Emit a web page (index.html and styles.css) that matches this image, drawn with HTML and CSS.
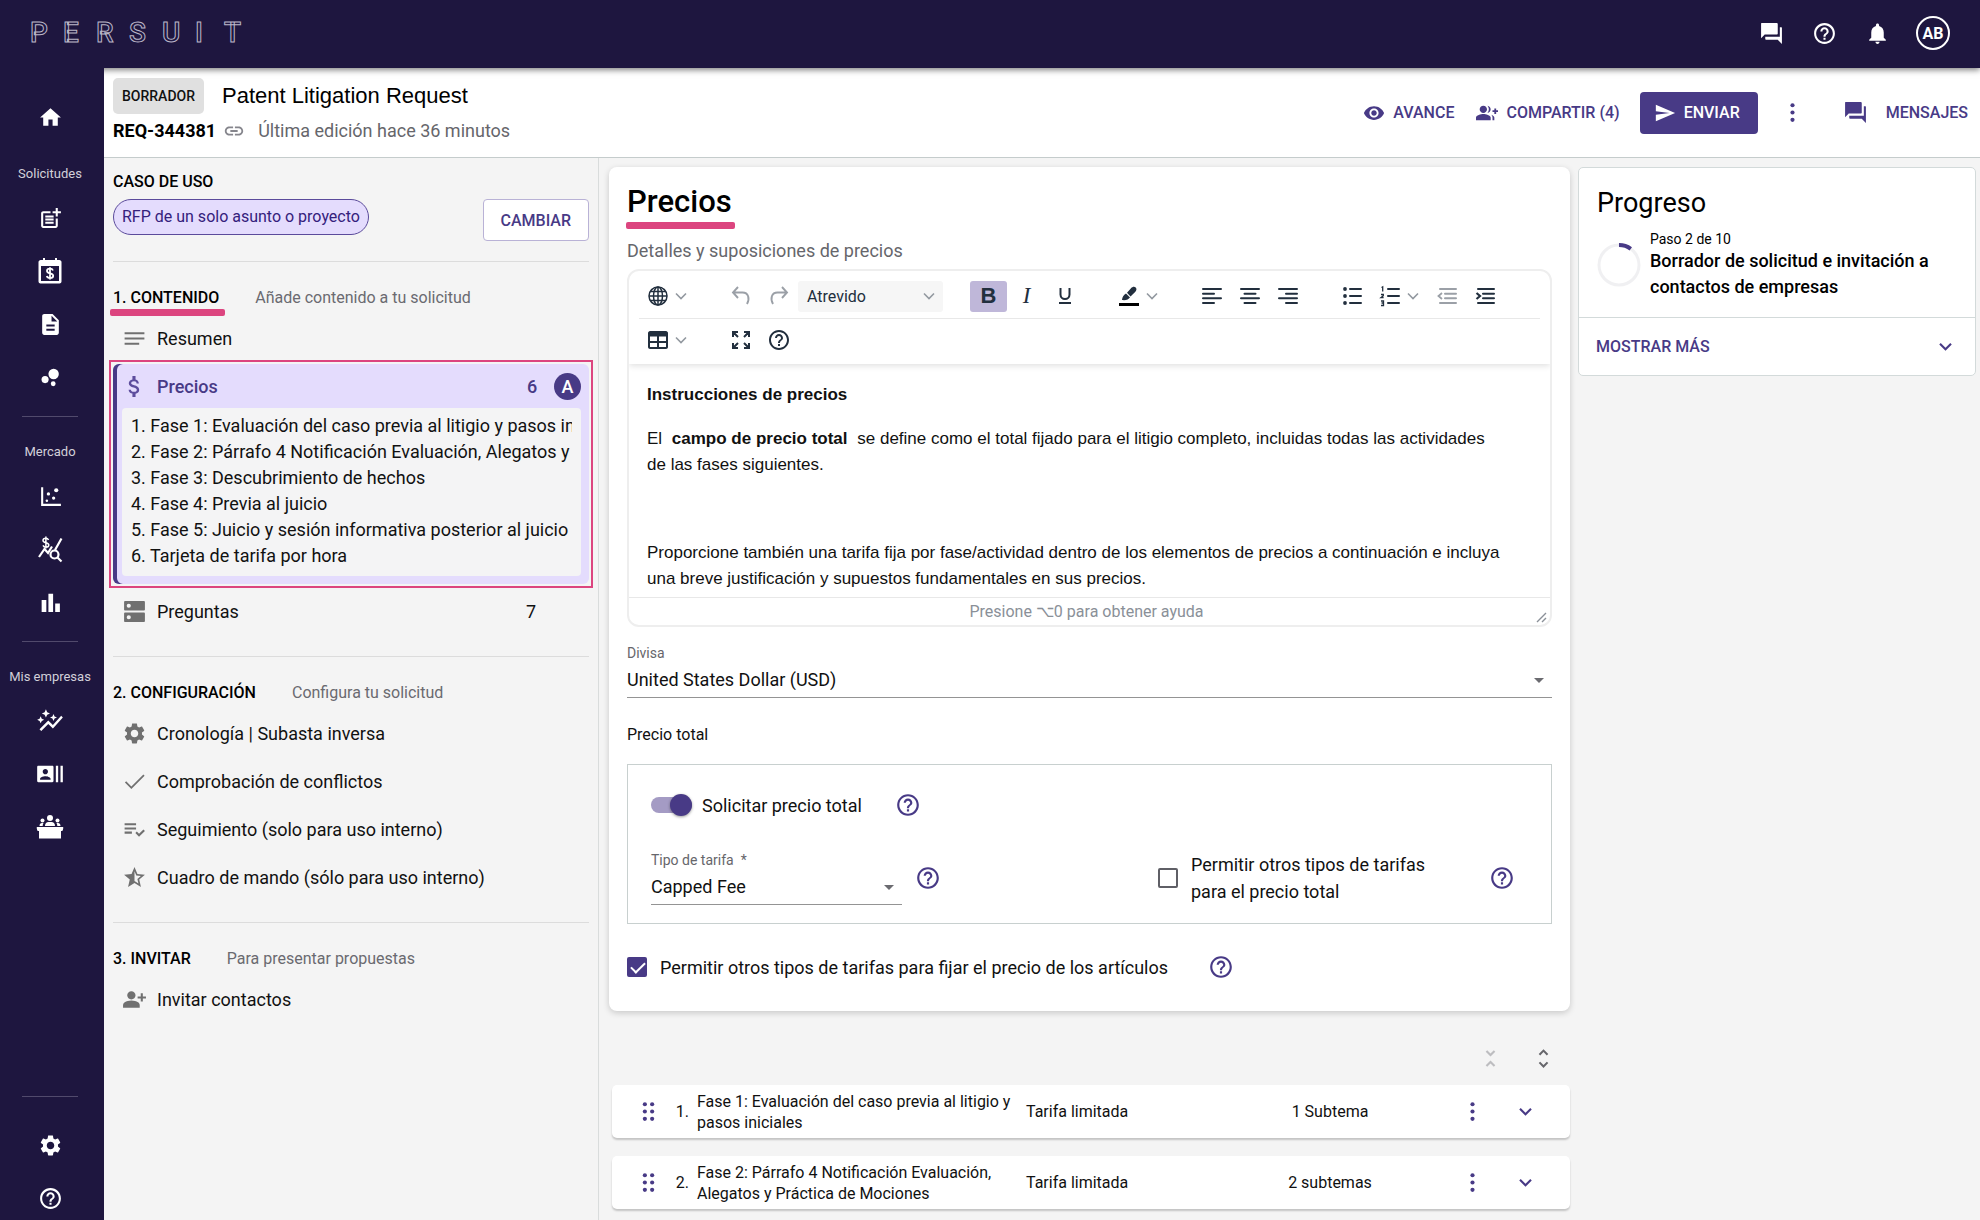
FILE: index.html
```html
<!DOCTYPE html>
<html lang="es">
<head>
    <title>Patent Litigation Request</title>
    <meta charset="UTF-8">
    <meta name="viewport" content="width=device-width, initial-scale=1">
    <link rel="stylesheet" href="styles.css">
</head>
<body>
    <!-- shared icons -->
    <svg class="sprite" aria-hidden="true">
        <symbol id="i-home" viewBox="0 0 24 24"><path d="M10 20v-6h4v6h5v-8h3L12 3 2 12h3v8z"/></symbol>
        <symbol id="i-help" viewBox="0 0 24 24"><path d="M11 18h2v-2h-2v2zm1-16C6.48 2 2 6.48 2 12s4.48 10 10 10 10-4.48 10-10S17.52 2 12 2zm0 18c-4.41 0-8-3.59-8-8s3.59-8 8-8 8 3.59 8 8-3.59 8-8 8zm0-14c-2.21 0-4 1.79-4 4h2c0-1.1.9-2 2-2s2 .9 2 2c0 2-3 1.75-3 5h2c0-2.25 3-2.5 3-5 0-2.21-1.79-4-4-4z"/></symbol>
        <symbol id="i-forum" viewBox="0 0 24 24"><path d="M2.5 2H17c.5 0 1 .5 1 1v9c0 .6-.4 1-1 1H5.500L2 16.500V2.500c0-.3.200-.5.500-.5z"/><path d="M20 6h1.500c.3 0 .5.200.5.500V22l-4-4H7c-.5 0-1-.5-1-1v-2h14z"/></symbol>
        <symbol id="i-bell" viewBox="0 0 24 24"><path d="M12 22c1.100 0 2-.9 2-2h-4c0 1.100.89 2 2 2zm6-6v-5c0-3.070-1.640-5.640-4.500-6.320V4c0-.83-.67-1.500-1.500-1.500s-1.500.67-1.500 1.500v.68C7.630 5.360 6 7.920 6 11v5l-2 2v1h16v-1l-2-2z"/></symbol>
        <symbol id="i-gear" viewBox="0 0 24 24"><path d="M19.140 12.940c.04-.3.060-.61.060-.94 0-.32-.02-.64-.07-.94l2.030-1.580c.18-.14.23-.41.12-.61l-1.920-3.320c-.12-.22-.37-.29-.59-.22l-2.390.96c-.5-.38-1.030-.7-1.620-.94l-.36-2.540c-.04-.24-.24-.41-.48-.41h-3.840c-.24 0-.43.17-.47.41l-.36 2.540c-.59.24-1.130.57-1.620.94l-2.390-.96c-.22-.08-.47 0-.59.22L2.740 8.870c-.12.21-.08.47.12.61l2.030 1.580c-.05.3-.09.63-.09.94s.02.64.07.94l-2.030 1.580c-.18.14-.23.41-.12.61l1.920 3.320c.12.22.37.29.59.22l2.390-.96c.5.38 1.030.7 1.620.94l.36 2.540c.05.24.24.41.48.41h3.840c.24 0 .44-.17.47-.41l.36-2.540c.59-.24 1.130-.56 1.620-.94l2.390.96c.22.08.47 0 .59-.22l1.920-3.320c.12-.22.07-.47-.12-.61l-2.010-1.580zM12 15.600c-1.980 0-3.600-1.620-3.600-3.600s1.620-3.600 3.600-3.600 3.600 1.620 3.600 3.600-1.620 3.600-3.600 3.600z"/></symbol>
        <symbol id="i-down" viewBox="0 0 24 24"><path d="M16.590 8.590 12 13.170 7.410 8.590 6 10l6 6 6-6z"/></symbol>
        <symbol id="i-more" viewBox="0 0 24 24"><circle cx="12" cy="5" r="2"/><circle cx="12" cy="12" r="2"/><circle cx="12" cy="19" r="2"/></symbol>
        <symbol id="i-drag" viewBox="0 0 24 24"><circle cx="8.500" cy="5" r="2"/><circle cx="8.500" cy="12" r="2"/><circle cx="8.500" cy="19" r="2"/><circle cx="15.500" cy="5" r="2"/><circle cx="15.500" cy="12" r="2"/><circle cx="15.500" cy="19" r="2"/></symbol>
        <symbol id="i-chev" viewBox="0 0 14 14"><path d="M2 4.500l5 5 5-5" fill="none" stroke="currentColor" stroke-width="1.600"/></symbol>
    </svg>

    <header class="header">
        <a class="logo" href="#" aria-label="Persuit"><span>P</span><span>E</span><span>R</span><span>S</span><span>U</span><span>I</span><span>T</span></a>
        <div class="header-tools">
            <button class="icon-btn" aria-label="Chat"><svg class="icon"><use href="#i-forum"/></svg></button>
            <button class="icon-btn" aria-label="Ayuda"><svg class="icon"><use href="#i-help"/></svg></button>
            <button class="icon-btn" aria-label="Notificaciones"><svg class="icon"><use href="#i-bell"/></svg></button>
            <button class="avatar">AB</button>
        </div>
    </header>

    <div class="shell">
        <nav class="sidebar">
            <a href="#" aria-label="Inicio"><svg class="icon"><use href="#i-home"/></svg></a>
            <span class="nav-label">Solicitudes</span>
            <div class="nav-group">
                <a href="#" aria-label="Nueva"><svg class="icon" viewBox="0 0 24 24"><path d="M17 19.220H5V7h7V5H5c-1.100 0-2 .9-2 2v12c0 1.100.9 2 2 2h12c1.100 0 2-.9 2-2v-7h-2v7.220z"/><path d="M19 2h-2v3h-3v2h3v3h2V7h3V5h-3V2zM7 9h8v2H7zM7 12h8v2H7zM7 15h8v2H7z"/></svg></a>
                <a href="#" aria-label="Calendario"><svg class="icon big" viewBox="0 0 28 28"><path fill-rule="evenodd" d="M7 1h2v2h10V1h2v2h2.500c1 0 2 1 2 2v19.500c0 1-1 2-2 2h-19c-1 0-2-1-2-2V5c0-1 1-2 2-2H7zM5 9v15h18V9z"/><path d="M17 13.500c-.5-1.300-1.600-1.800-3-1.800-1.700 0-3 .8-3 2.200 0 3.200 6.200 1.600 6.200 4.900 0 1.500-1.400 2.300-3.200 2.300-1.600 0-2.800-.7-3.200-2M14 10.300v12.200" fill="none" stroke="currentColor" stroke-width="1.800"/></svg></a>
                <a href="#" aria-label="Documentos"><svg class="icon" viewBox="0 0 24 24"><path d="M14 2H6c-1.100 0-2 .9-2 2v16c0 1.100.9 2 2 2h12c1.100 0 2-.9 2-2V8l-6-6zm2 16H8v-2h8v2zm0-4H8v-2h8v2zm-3-5V3.500L18.500 9H13z"/></svg></a>
                <a href="#" aria-label="Burbujas"><svg class="icon" viewBox="0 0 24 24"><circle cx="6.800" cy="14" r="3.400"/><circle cx="14.600" cy="18" r="2.300"/><circle cx="15" cy="8.600" r="5"/></svg></a>
            </div>
            <hr>
            <span class="nav-label">Mercado</span>
            <div class="nav-group">
                <a href="#" aria-label="Dispersión"><svg class="icon" viewBox="0 0 24 24"><path d="M3 3h2v16h17v2H3z"/><circle cx="8.500" cy="16" r="1.200"/><circle cx="10" cy="9.500" r="1.600"/><circle cx="15" cy="13.500" r="1.600"/><circle cx="17.500" cy="6" r="2"/></svg></a>
                <a href="#" aria-label="Análisis de precios"><svg class="icon big" viewBox="0 0 28 28"><g fill="none" stroke="currentColor"><path d="M3 22l5.500-8 3.500 4 4-6.500M19 15l6.500-11.500" stroke-width="2.200"/><path d="M12.500 5c-.5-1.300-1.400-1.800-2.700-1.800-1.500 0-2.800.8-2.800 2.200 0 2.900 5.800 1.800 5.800 4.700 0 1.300-1.200 2.100-2.800 2.100-1.400 0-2.500-.6-3-1.800M9.900 1.500v12" stroke-width="1.500"/><circle cx="18.500" cy="19.500" r="4" stroke-width="2.200"/><path d="M21.500 22.500l4 4" stroke-width="2.200"/></g></svg></a>
                <a href="#" aria-label="Estadísticas"><svg class="icon" viewBox="0 0 24 24"><path d="M3.500 9.500H8V21H3.500zM10 3.500h4.500V21H10zM16.500 13H21v8h-4.500z"/></svg></a>
            </div>
            <hr>
            <span class="nav-label">Mis empresas</span>
            <div class="nav-group">
                <a href="#" aria-label="Tendencias"><svg class="icon big" viewBox="0 0 24 24"><path d="M14.060 9.940 12 9l2.060-.94L15 6l.94 2.060L18 9l-2.060.94L15 12l-.94-2.060zM4 14l.94-2.060L7 11l-2.060-.94L4 8l-.94 2.060L1 11l2.060.94L4 14zm4.500-5 1.090-2.410L12 5.500 9.590 4.410 8.500 2 7.410 4.410 5 5.500l2.410 1.090L8.500 9zm-4 11.500 6-6.010 4 4L23 8.930l-1.410-1.410-7.090 7.970-4-4L3 19l1.500 1.500z"/></svg></a>
                <a href="#" aria-label="Contactos"><svg class="icon big" viewBox="0 0 24 24"><path d="M21 5v14h2V5h-2zm-4 14h2V5h-2v14zM14 5H2c-.55 0-1 .45-1 1v12c0 .55.45 1 1 1h12c.55 0 1-.45 1-1V6c0-.55-.45-1-1-1zM8 7.750c1.240 0 2.250 1.010 2.250 2.250S9.240 12.250 8 12.250 5.750 11.240 5.750 10 6.760 7.750 8 7.750zM12.500 17h-9v-.75c0-1.500 3-2.250 4.500-2.250s4.500.75 4.500 2.250V17z"/></svg></a>
                <a href="#" aria-label="Paneles"><svg class="icon big" viewBox="0 0 28 28"><circle cx="14" cy="5" r="3"/><circle cx="6.500" cy="7.500" r="2"/><circle cx="21.500" cy="7.500" r="2"/><path d="M9 13c0-2.500 1.500-4 3.500-4h3c2 0 3.500 1.500 3.500 4zM3.500 13c0-1.800 1-3 2.500-3h1.500c-.6 1-.8 2-.8 3zM24.500 13c0-1.800-1-3-2.500-3h-1.500c.6 1 .8 2 .8 3z"/><path d="M1.500 14h25c.6 0 .9.400.8.900l-.5 2.300c-.1.500-.4.800-.9.800H25v7.500H3V18h-.9c-.5 0-.8-.3-.9-.8l-.5-2.300c-.1-.5.200-.9.800-.9z"/></svg></a>
            </div>
            <hr class="push">
            <div class="nav-group bottom">
                <a href="#" aria-label="Ajustes"><svg class="icon"><use href="#i-gear"/></svg></a>
                <a href="#" aria-label="Ayuda"><svg class="icon"><use href="#i-help"/></svg></a>
            </div>
        </nav>

        <div class="page">
            <div class="topbar">
                <div class="topbar-info">
                    <div class="title-row">
                        <span class="status-chip">BORRADOR</span>
                        <h1>Patent Litigation Request</h1>
                    </div>
                    <div class="meta-row">
                        <b>REQ-344381</b>
                        <svg class="link-icon" viewBox="0 0 24 24"><path d="M3.900 12c0-1.710 1.390-3.100 3.100-3.100h4V7H7c-2.760 0-5 2.240-5 5s2.240 5 5 5h4v-1.900H7c-1.710 0-3.100-1.390-3.100-3.100zM8 13h8v-2H8v2zm9-6h-4v1.900h4c1.710 0 3.100 1.390 3.100 3.100s-1.390 3.100-3.100 3.100h-4V17h4c2.760 0 5-2.240 5-5s-2.240-5-5-5z"/></svg>
                        <span>Última edición hace 36 minutos</span>
                    </div>
                </div>
                <div class="actions">
                    <button class="text-btn"><svg class="icon small" viewBox="0 0 24 24"><path d="M12 4.500C7 4.500 2.730 7.610 1 12c1.730 4.390 6 7.500 11 7.500s9.270-3.110 11-7.500c-1.730-4.390-6-7.500-11-7.500zM12 17c-2.760 0-5-2.240-5-5s2.240-5 5-5 5 2.240 5 5-2.240 5-5 5zm0-8c-1.660 0-3 1.340-3 3s1.340 3 3 3 3-1.340 3-3-1.340-3-3-3z"/></svg>AVANCE</button>
                    <button class="text-btn share"><svg class="icon small" viewBox="0 0 24 24"><path d="M22 9V7h-2v2h-2v2h2v2h2v-2h2V9zM8 12c2.210 0 4-1.790 4-4s-1.790-4-4-4-4 1.790-4 4 1.790 4 4 4zm0 1c-2.670 0-8 1.340-8 4v3h16v-3c0-2.660-5.330-4-8-4zm4.510-8.950C13.430 5.110 14 6.490 14 8s-.57 2.890-1.490 3.950C14.470 11.700 16 10.040 16 8s-1.530-3.700-3.490-3.950zm4.020 9.780C17.420 14.660 18 15.700 18 17v3h2v-3c0-1.450-1.590-2.510-3.470-3.170z"/></svg>COMPARTIR (4)</button>
                    <button class="send-btn"><svg class="icon small" viewBox="0 0 24 24"><path d="M2 21 23 12 2 3v7l15 2-15 2z"/></svg>ENVIAR</button>
                    <button class="icon-btn" aria-label="Más"><svg class="icon"><use href="#i-more"/></svg></button>
                    <button class="text-btn messages"><svg class="icon"><use href="#i-forum"/></svg>MENSAJES</button>
                </div>
            </div>

            <div class="body">
                <div class="steps">
                    <section class="use-case">
                        <h2>CASO DE USO</h2>
                        <div class="use-case-row">
                            <span class="use-chip">RFP de un solo asunto o proyecto</span>
                            <button class="change-btn">CAMBIAR</button>
                        </div>
                    </section>

                    <section class="step">
                        <div class="step-head"><h2 class="marked">1. CONTENIDO</h2><span>Añade contenido a tu solicitud</span></div>
                        <a class="step-row" href="#"><svg class="icon" viewBox="0 0 24 24"><path d="M2.500 18h14v-2h-14zM2.500 6v2h19V6zm0 7h19v-2h-19z"/></svg>Resumen</a>
                        <div class="highlight">
                            <div class="active-step">
                                <a class="step-row" href="#"><svg class="icon" viewBox="0 0 24 24"><path d="M11.800 10.900c-2.270-.59-3-1.200-3-2.150 0-1.090 1.010-1.850 2.700-1.850 1.780 0 2.440.85 2.500 2.100h2.210c-.07-1.720-1.120-3.300-3.210-3.810V2h-3v3.160c-1.940.42-3.500 1.680-3.500 3.610 0 2.310 1.910 3.460 4.700 4.130 2.500.6 3 1.480 3 2.410 0 .69-.49 1.790-2.700 1.790-2.060 0-2.870-.92-2.980-2.100h-2.200c.12 2.190 1.760 3.420 3.680 3.830V22h3v-3.150c1.950-.37 3.500-1.500 3.500-3.550 0-2.840-2.430-3.810-4.700-4.400z"/></svg>Precios<span class="count">6</span><span class="owner">A</span></a>
                                <ol class="phases">
                                    <li>1. Fase 1: Evaluación del caso previa al litigio y pasos iniciales</li>
                                    <li>2. Fase 2: Párrafo 4 Notificación Evaluación, Alegatos y Práctica de Mociones</li>
                                    <li>3. Fase 3: Descubrimiento de hechos</li>
                                    <li>4. Fase 4: Previa al juicio</li>
                                    <li>5. Fase 5: Juicio y sesión informativa posterior al juicio</li>
                                    <li>6. Tarjeta de tarifa por hora</li>
                                </ol>
                            </div>
                        </div>
                        <a class="step-row" href="#"><svg class="icon" viewBox="0 0 24 24"><path d="M21 13H3c-.5 0-1 .5-1 1v7c0 .5.500 1 1 1h18c.5 0 1-.5 1-1v-7c0-.5-.5-1-1-1zM6.500 19.500a2 2 0 1 1 0-4 2 2 0 0 1 0 4zM21 2H3c-.5 0-1 .5-1 1v7c0 .5.500 1 1 1h18c.5 0 1-.5 1-1V3c0-.5-.5-1-1-1zM6.500 8.500a2 2 0 1 1 0-4 2 2 0 0 1 0 4z"/></svg>Preguntas<span class="count">7</span></a>
                    </section>

                    <section class="step">
                        <div class="step-head"><h2>2. CONFIGURACIÓN</h2><span>Configura tu solicitud</span></div>
                        <a class="step-row" href="#"><svg class="icon"><use href="#i-gear"/></svg>Cronología | Subasta inversa</a>
                        <a class="step-row" href="#"><svg class="icon" viewBox="0 0 24 24"><path d="M9 16.800 4 11.800l-1.200 1.200L9 19.200 21.700 6.500l-1.200-1.200z"/></svg>Comprobación de conflictos</a>
                        <a class="step-row" href="#"><svg class="icon" viewBox="0 0 24 24"><path d="M2.500 10h11v2h-11zm0-4h11v2h-11zm0 8h7v2h-7zm18.100-2.100-4.250 4.250-2.120-2.120-1.410 1.410L16.340 19 22 13.340z"/></svg>Seguimiento (solo para uso interno)</a>
                        <a class="step-row" href="#"><svg class="icon" viewBox="0 0 24 24"><path d="m22 9.240-7.190-.62L12 2 9.190 8.630 2 9.240l5.460 4.730L5.820 21 12 17.270 18.180 21l-1.630-7.030L22 9.240zM12 15.400V6.100l1.710 4.040 4.380.38-3.320 2.880 1 4.280L12 15.400z"/></svg>Cuadro de mando (sólo para uso interno)</a>
                    </section>

                    <section class="step">
                        <div class="step-head"><h2>3. INVITAR</h2><span>Para presentar propuestas</span></div>
                        <a class="step-row" href="#"><svg class="icon" viewBox="0 0 24 24"><path d="M15.390 14.560C13.710 13.700 11.530 13 9 13s-4.710.7-6.390 1.560A2.970 2.970 0 0 0 1 17.220V20h16v-2.780c0-1.120-.61-2.150-1.610-2.660zM9 12c2.210 0 4-1.790 4-4s-1.790-4-4-4-4 1.790-4 4 1.790 4 4 4zm11-3V6h-2v3h-3v2h3v3h2v-3h3V9z"/></svg>Invitar contactos</a>
                    </section>
                </div>

                <main class="content">
                    <section class="card">
                        <h2 class="card-title">Precios</h2>
                        <p class="card-sub">Detalles y suposiciones de precios</p>

                        <div class="editor">
                            <div class="toolbar">
                                <div class="tool-row">
                                    <div class="tools">
                                        <button class="drop" aria-label="Idioma"><svg class="ticon" viewBox="0 0 22 22"><g fill="none" stroke="currentColor" stroke-width="1.500"><circle cx="11" cy="11" r="9"/><ellipse cx="11" cy="11" rx="4.500" ry="9"/><path d="M11 2v18M2 11h18M3.500 6.500h15M3.500 15.500h15"/></g></svg><svg class="chev"><use href="#i-chev"/></svg></button>
                                    </div>
                                    <div class="tools">
                                        <button class="tool off" aria-label="Deshacer"><svg class="ticon" viewBox="0 0 22 22"><path d="M8 2 3 7.500 8 13M3 7.500h9.500c6 0 7.500 6 4.500 11.500" fill="none" stroke="currentColor" stroke-width="1.900"/></svg></button>
                                        <button class="tool off" aria-label="Rehacer"><svg class="ticon" viewBox="0 0 22 22"><path d="M14 2l5 5.500-5 5.500M19 7.500H9.500c-6 0-7.500 6-4.500 11.500" fill="none" stroke="currentColor" stroke-width="1.900"/></svg></button>
                                        <button class="style-pick">Atrevido<svg class="chev"><use href="#i-chev"/></svg></button>
                                    </div>
                                    <div class="tools">
                                        <button class="tool on" aria-label="Negrita"><b>B</b></button>
                                        <button class="tool" aria-label="Cursiva"><i>I</i></button>
                                        <button class="tool" aria-label="Subrayado"><svg class="ticon" viewBox="0 0 22 22"><path d="M6.500 3v6.500a4.500 4.500 0 0 0 9 0V3M5 18h12" fill="none" stroke="currentColor" stroke-width="2"/></svg></button>
                                    </div>
                                    <div class="tools">
                                        <button class="drop" aria-label="Color"><svg class="ticon" viewBox="0 0 22 22"><path d="M4 15c.2-3 1.500-5 4-6.500l4 4C10.500 14.500 8 15.500 4 15zM9 7.800l4-4.500c1.500-1.800 3.500-2 4.700-.8s1 3.200-.8 4.700l-4.400 4.200z"/><path fill="#000" d="M1 18h20v3H1z"/></svg><svg class="chev"><use href="#i-chev"/></svg></button>
                                    </div>
                                    <div class="tools">
                                        <button class="tool" aria-label="Izquierda"><svg class="ticon" viewBox="0 0 22 22"><path d="M2 4h18M2 8.700h11M2 13.300h18M2 18h11" class="bars"/></svg></button>
                                        <button class="tool" aria-label="Centro"><svg class="ticon" viewBox="0 0 22 22"><path d="M2 4h18M5.500 8.700h11M2 13.300h18M5.500 18h11" class="bars"/></svg></button>
                                        <button class="tool" aria-label="Derecha"><svg class="ticon" viewBox="0 0 22 22"><path d="M2 4h18M9 8.700h11M2 13.300h18M9 18h11" class="bars"/></svg></button>
                                    </div>
                                    <div class="tools">
                                        <button class="tool" aria-label="Viñetas"><svg class="ticon" viewBox="0 0 22 22"><path d="M9 4h11M9 11h11M9 18h11" class="bars"/><circle cx="4" cy="4" r="1.900"/><circle cx="4" cy="11" r="1.900"/><circle cx="4" cy="18" r="1.900"/></svg></button>
                                        <button class="drop" aria-label="Numeración"><svg class="ticon" viewBox="0 0 22 22"><path d="M9 4h11M9 11h11M9 18h11" class="bars"/><path d="M2.500 2.500l1.200-.6v4.600M2 9.500h2.300v1.300L2 12.700h2.600M2 16h2.500v4.500H2M4.500 18H2.500" fill="none" stroke="currentColor" stroke-width="1.300"/></svg><svg class="chev"><use href="#i-chev"/></svg></button>
                                        <button class="tool off" aria-label="Reducir sangría"><svg class="ticon" viewBox="0 0 22 22"><path d="M4 4h16M9 8.700h11M9 13.300h11M4 18h16" class="bars"/><path d="M6 8l-3.500 3L6 14" fill="none" stroke="currentColor" stroke-width="1.800"/></svg></button>
                                        <button class="tool" aria-label="Aumentar sangría"><svg class="ticon" viewBox="0 0 22 22"><path d="M4 4h16M9 8.700h11M9 13.300h11M4 18h16" class="bars"/><path d="M2.500 8 6 11l-3.500 3" fill="none" stroke="currentColor" stroke-width="2.200"/></svg></button>
                                    </div>
                                </div>
                                <div class="tool-row second">
                                    <div class="tools">
                                        <button class="drop" aria-label="Tabla"><svg class="ticon" viewBox="0 0 22 22"><path fill-rule="evenodd" d="M3 2h16c1 0 2 1 2 2v14c0 1-1 2-2 2H3c-1 0-2-1-2-2V4c0-1 1-2 2-2zm0 5.500V12h7V7.500zm9 0V12h7V7.500zM3 14v4h7v-4zm9 0v4h7v-4z"/></svg><svg class="chev"><use href="#i-chev"/></svg></button>
                                    </div>
                                    <div class="tools">
                                        <button class="tool" aria-label="Pantalla completa"><svg class="ticon" viewBox="0 0 22 22"><path d="M3 8V3h5M3 3l5 5M14 3h5v5M19 3l-5 5M3 14v5h5M3 19l5-5M19 14v5h-5M19 19l-5-5" fill="none" stroke="currentColor" stroke-width="2"/></svg></button>
                                        <button class="tool" aria-label="Ayuda"><svg class="ticon" viewBox="1 1 22 22"><use href="#i-help" width="24" height="24"/></svg></button>
                                    </div>
                                </div>
                            </div>
                            <div class="editor-text">
                                <p><b>Instrucciones de precios</b></p>
                                <p>El <b class="term">campo de precio total</b> se define como el total fijado para el litigio completo, incluidas todas las actividades<br>de las fases siguientes.</p>
                                <p><br></p>
                                <p>Proporcione también una tarifa fija por fase/actividad dentro de los elementos de precios a continuación e incluya<br>una breve justificación y supuestos fundamentales en sus precios.</p>
                            </div>
                            <div class="editor-status">Presione ⌥0 para obtener ayuda
                                <svg class="grip" viewBox="0 0 12 12"><path d="M2 11l9-9M7 11l4-4" fill="none" stroke="currentColor" stroke-width="1.400"/></svg>
                            </div>
                        </div>

                        <div class="field currency">
                            <label for="currency">Divisa</label>
                            <select id="currency"><option>United States Dollar (USD)</option></select>
                        </div>

                        <h3>Precio total</h3>
                        <div class="total-box">
                            <div class="switch-row">
                                <input class="switch" type="checkbox" id="total" checked>
                                <label for="total">Solicitar precio total</label>
                                <button class="help" aria-label="Ayuda"><svg class="hicon"><use href="#i-help"/></svg></button>
                            </div>
                            <div class="fee-row">
                                <div class="field fee">
                                    <label for="fee">Tipo de tarifa &nbsp;*</label>
                                    <select id="fee"><option>Capped Fee</option></select>
                                </div>
                                <button class="help" aria-label="Ayuda"><svg class="hicon"><use href="#i-help"/></svg></button>
                                <div class="check other">
                                    <input type="checkbox" id="other-total">
                                    <label for="other-total">Permitir otros tipos de tarifas para el precio total</label>
                                </div>
                                <button class="help" aria-label="Ayuda"><svg class="hicon"><use href="#i-help"/></svg></button>
                            </div>
                        </div>

                        <div class="check items">
                            <input type="checkbox" id="other-items" checked>
                            <label for="other-items">Permitir otros tipos de tarifas para fijar el precio de los artículos</label>
                            <button class="help" aria-label="Ayuda"><svg class="hicon"><use href="#i-help"/></svg></button>
                        </div>
                    </section>

                    <div class="expanders">
                        <button class="icon-btn faded" aria-label="Contraer todo"><svg class="icon" viewBox="0 0 24 24"><path d="M7.410 18.590 8.830 20 12 16.830 15.170 20l1.410-1.410L12 14zm9.180-13.180L15.170 4 12 7.170 8.830 4 7.410 5.410 12 10z"/></svg></button>
                        <button class="icon-btn" aria-label="Expandir todo"><svg class="icon" viewBox="0 0 24 24"><path d="M12 5.830 15.170 9l1.410-1.410L12 3 7.410 7.590 8.830 9zm0 12.340L8.830 15l-1.410 1.410L12 21l4.590-4.590L15.170 15z"/></svg></button>
                    </div>

                    <article class="item">
                        <svg class="icon drag"><use href="#i-drag"/></svg>
                        <span class="num">1.</span>
                        <span class="name">Fase 1: Evaluación del caso previa al litigio y pasos iniciales</span>
                        <span class="type">Tarifa limitada</span>
                        <span class="subs">1 Subtema</span>
                        <button class="icon-btn" aria-label="Más"><svg class="icon"><use href="#i-more"/></svg></button>
                        <button class="icon-btn" aria-label="Abrir"><svg class="icon"><use href="#i-down"/></svg></button>
                    </article>
                    <article class="item">
                        <svg class="icon drag"><use href="#i-drag"/></svg>
                        <span class="num">2.</span>
                        <span class="name">Fase 2: Párrafo 4 Notificación Evaluación, Alegatos y Práctica de Mociones</span>
                        <span class="type">Tarifa limitada</span>
                        <span class="subs">2 subtemas</span>
                        <button class="icon-btn" aria-label="Más"><svg class="icon"><use href="#i-more"/></svg></button>
                        <button class="icon-btn" aria-label="Abrir"><svg class="icon"><use href="#i-down"/></svg></button>
                    </article>
                </main>

                <aside class="progress">
                    <div class="progress-main">
                        <h2>Progreso</h2>
                        <div class="progress-row">
                            <svg class="ring" viewBox="0 0 44 44"><circle cx="22" cy="22" r="20" fill="none" stroke="#f0f0f2" stroke-width="3"/><path d="M22 2a20 20 0 0 1 11.800 3.800" fill="none" stroke="#483a86" stroke-width="4"/></svg>
                            <div>
                                <p class="progress-step">Paso 2 de 10</p>
                                <p class="progress-name">Borrador de solicitud e invitación a contactos de empresas</p>
                            </div>
                        </div>
                    </div>
                    <button class="show-more">MOSTRAR MÁS<svg class="icon"><use href="#i-down"/></svg></button>
                </aside>
            </div>
        </div>
    </div>
</body>
</html>
```

FILE: styles.css
```css
* {
    box-sizing: border-box;
}

body {
    margin: 0;
    min-height: 100vh;
    display: flex;
    flex-direction: column;
    background: #f4f4f4;
    color: #111;
    font-family: Roboto, "Liberation Sans", sans-serif;
    font-size: 18px;
}

h1, h2, h3, p, ol {
    margin: 0;
    padding: 0;
}

a {
    color: inherit;
    text-decoration: none;
}

button {
    padding: 0;
    border: none;
    background: none;
    color: inherit;
    font: inherit;
    cursor: pointer;
}

svg {
    display: block;
    flex: none;
    fill: currentColor;
}

.sprite {
    position: absolute;
    width: 0;
    height: 0;
}

.icon {
    width: 25px;
    height: 25px;
}

.icon.small {
    width: 22px;
    height: 22px;
}

.icon.big {
    width: 28px;
    height: 28px;
}

.icon-btn {
    display: flex;
    align-items: center;
    justify-content: center;
}

/* header */
.header {
    position: relative;
    z-index: 2;
    display: flex;
    align-items: center;
    justify-content: space-between;
    height: 68px;
    padding: 0 30px 2px;
    background: #1e163f;
    color: #fff;
    box-shadow: 0 2px 6px rgba(0, 0, 0, 0.5);
}

.logo {
    display: flex;
    font-size: 28px;
    line-height: 32px;
    font-weight: 500;
    color: #1e163f;
    -webkit-text-stroke: 1px #bbb7c9;
}

.logo span {
    width: 33px;
}

.logo span:nth-child(6) {
    width: 29px;
}

.header-tools {
    display: flex;
    align-items: center;
    gap: 28px;
}

.avatar {
    width: 34px;
    height: 34px;
    margin-left: -2px;
    border: 2px solid #fff;
    border-radius: 50%;
    font-size: 16px;
    font-weight: 700;
}

/* left navigation */
.shell {
    flex: 1;
    display: flex;
}

.sidebar {
    position: relative;
    z-index: 3;
    flex: none;
    width: 104px;
    padding: 27px 4px 0 0;
    display: flex;
    flex-direction: column;
    align-items: center;
    background: #1e163f;
    color: #fff;
}

.sidebar a {
    display: flex;
    align-items: center;
    justify-content: center;
    width: 100px;
    height: 44px;
}

.nav-group {
    display: flex;
    flex-direction: column;
    gap: 9px;
}

.sidebar hr {
    width: 56px;
    height: 1px;
    margin: 17px 0 0;
    border: none;
    background: #514a6c;
}

.sidebar hr.push {
    margin-top: auto;
}

.nav-group.bottom {
    margin-top: 26px;
}

.nav-label {
    margin: 26px 0 13px;
    font-size: 13px;
    line-height: 18px;
    color: #d2d0d9;
}

/* request bar */
.page {
    flex: 1;
    min-width: 0;
}

.topbar {
    display: flex;
    justify-content: space-between;
    padding: 10px 12px 14px 9px;
    background: #fff;
    border-bottom: 1px solid #c5cccc;
}

.title-row {
    display: flex;
    align-items: center;
    gap: 18px;
    height: 36px;
    margin-bottom: 5px;
}

.title-row h1 {
    font: 22px "Liberation Sans", Arial, sans-serif;
    color: #000;
}

.status-chip {
    padding: 0 9px;
    border-radius: 5px;
    background: #e0e0e0;
    font-size: 14px;
    line-height: 36px;
    font-weight: 500;
}

.meta-row {
    display: flex;
    align-items: center;
    line-height: 24px;
    color: #66666b;
}

.meta-row b {
    font-weight: 700;
    color: #000;
}

.link-icon {
    width: 22px;
    height: 22px;
    margin: 0 13px 0 7px;
    fill: #85858c;
}

.actions {
    display: flex;
    align-items: center;
    padding-top: 4px;
    color: #483a86;
    font-size: 16px;
    font-weight: 500;
}

.text-btn, .send-btn {
    display: flex;
    align-items: center;
    gap: 8px;
}

.share {
    margin: 0 20px 0 22px;
}

.send-btn {
    height: 42px;
    padding: 0 18px 0 14px;
    margin-right: 22px;
    border-radius: 4px;
    background: #483a86;
    color: #fff;
}

.messages {
    gap: 18px;
    margin-left: 38px;
}

/* steps column */
.body {
    display: flex;
}

.steps {
    flex: none;
    width: 495px;
    min-height: 1062px;
    padding: 0 9px;
    border-right: 1px solid #d9dcdc;
}

.steps h2 {
    font-size: 16px;
    line-height: 24px;
    font-weight: 500;
    color: #000;
}

.use-case {
    padding: 12px 0 20px;
    border-bottom: 1px solid #dcdcdc;
}

.use-case-row {
    display: flex;
    justify-content: space-between;
    align-items: flex-start;
    margin-top: 5px;
}

.use-chip {
    padding: 0 8px;
    border: 1px solid #5b4b9b;
    border-radius: 18px;
    background: #e4dcfd;
    color: #34217c;
    font-size: 16px;
    line-height: 34px;
}

.change-btn {
    height: 42px;
    padding: 0 17px;
    border: 1px solid #b9b2d6;
    border-radius: 4px;
    background: #fff;
    color: #483a86;
    font-size: 16px;
    font-weight: 500;
}

.step {
    padding: 24px 0 21px;
    border-bottom: 1px solid #dcdcdc;
}

.step:last-child {
    border-bottom: none;
}

.step-head {
    display: flex;
    gap: 36px;
    margin-bottom: 4px;
    font-size: 16px;
    line-height: 24px;
    color: #6a6a70;
}

.marked {
    position: relative;
}

.marked::after {
    content: "";
    position: absolute;
    left: -3px;
    right: -6px;
    bottom: -6px;
    height: 7px;
    border-radius: 2px;
    background: #dc457f;
}

.step-row {
    position: relative;
    display: flex;
    align-items: center;
    gap: 10px;
    height: 48px;
    padding-left: 9px;
}

.step-row > .icon {
    fill: #707070;
}

.count {
    width: 24px;
    margin-left: auto;
    margin-right: 46px;
    text-align: center;
}

.highlight {
    margin: 2px 0 3px;
    outline: 2px solid #dc457f;
    outline-offset: 2px;
}

.active-step {
    padding: 0 8px 8px 9px;
    border-radius: 6px;
    background: #e4dcfd;
    box-shadow: inset 4px 0 #483a86;
}

.active-step .step-row {
    height: 44px;
    padding-left: 0;
    color: #483a86;
    font-weight: 500;
}

.active-step .step-row > .icon {
    fill: #5d4d9d;
}

.active-step .count {
    margin-right: 0;
}

.owner {
    width: 27px;
    height: 27px;
    border-radius: 50%;
    background: #483a86;
    color: #fff;
    line-height: 27px;
    text-align: center;
}

.phases {
    padding: 5px 9px 7px;
    border-radius: 4px;
    background: #f4f4f5;
    list-style: none;
    line-height: 26px;
}

.phases li {
    overflow: hidden;
    white-space: nowrap;
}

/* pricing card */
.content {
    flex: 1;
    min-width: 0;
    padding: 9px 9px 9px 10px;
}

.card {
    padding: 18px 18px 32px;
    border-radius: 8px;
    background: #fff;
    box-shadow: 0 2px 6px rgba(0, 0, 0, 0.18);
}

.card-title {
    position: relative;
    width: max-content;
    font-size: 31px;
    line-height: 34px;
    font-weight: 500;
    color: #000;
}

.card-title::after {
    content: "";
    position: absolute;
    left: -1px;
    right: -3px;
    bottom: -10px;
    height: 7px;
    border-radius: 2px;
    background: #dc457f;
}

.card-sub {
    margin: 20px 0 6px;
    line-height: 24px;
    color: #66666b;
}

.editor {
    border: 2px solid #eee;
    border-radius: 12px;
    overflow: hidden;
    color: #222f3e;
}

.toolbar {
    position: relative;
    padding: 3px 10px 4px;
    box-shadow: 0 2px 6px rgba(0, 0, 0, 0.12);
}

.tool-row {
    display: flex;
    align-items: center;
    gap: 27px;
    height: 44px;
}

.tool-row.second {
    height: 42px;
    border-top: 1px solid #e8e8e8;
}

.tools {
    display: flex;
    gap: 1px;
}

.tool {
    display: flex;
    align-items: center;
    justify-content: center;
    width: 37px;
    height: 31px;
    border-radius: 3px;
}

.tool.on {
    background: #bfb7d9;
}

.tool.off {
    color: #9ba0a7;
}

.tool b {
    font: 700 22px "Liberation Sans", Arial, sans-serif;
}

.tool i {
    font: italic 23px "Liberation Serif", serif;
}

.drop {
    display: flex;
    align-items: center;
    gap: 5px;
    width: 56px;
    height: 31px;
    padding-left: 8px;
}

.ticon {
    width: 22px;
    height: 22px;
}

.bars {
    fill: none;
    stroke: currentColor;
    stroke-width: 2;
    stroke-linecap: round;
}

.chev {
    width: 14px;
    height: 14px;
    color: #9399a0;
}

.style-pick {
    display: flex;
    align-items: center;
    justify-content: space-between;
    width: 145px;
    height: 31px;
    padding: 0 7px 0 9px;
    border-radius: 3px;
    background: #f6f6f6;
    font-size: 16px;
}

.editor-text {
    padding: 18px 8px 5px 18px;
    color: #111;
    font-family: "Liberation Sans", Arial, sans-serif;
    font-size: 17px;
    line-height: 26px;
}

.editor-text p + p {
    margin-top: 18px;
}

.term {
    margin: 0 5px;
}

.editor-status {
    position: relative;
    padding-right: 6px;
    border-top: 1px solid #e8e8e8;
    font-size: 16px;
    line-height: 27px;
    text-align: center;
    color: #8a9098;
}

.grip {
    position: absolute;
    right: 3px;
    bottom: 2px;
    width: 12px;
    height: 12px;
}

.field {
    position: relative;
    display: flex;
    flex-direction: column;
}

.field label {
    font-size: 14px;
    line-height: 18px;
    color: #66666b;
}

.field select {
    height: 36px;
    padding: 0;
    border: none;
    border-bottom: 1px solid #949494;
    border-radius: 0;
    background: none;
    appearance: none;
    color: #111;
    font: inherit;
}

.field::after {
    content: "";
    position: absolute;
    right: 8px;
    bottom: 15px;
    border: 5px solid transparent;
    border-top-color: #6b6b70;
    border-bottom: none;
}

.currency {
    margin-top: 17px;
}

.card h3 {
    margin: 25px 0 17px;
    font-size: 16px;
    line-height: 24px;
    font-weight: 400;
}

.total-box {
    padding: 24px 36px 18px 23px;
    border: 1px solid #c8d0cf;
}

.switch-row, .fee-row, .check {
    display: flex;
    align-items: center;
}

.switch-row {
    height: 32px;
    margin-bottom: 30px;
}

.switch-row .help {
    margin-left: 33px;
}

.switch {
    position: relative;
    width: 41px;
    height: 16px;
    margin: 0 10px 0 0;
    border-radius: 8px;
    background: #a49bc4;
    appearance: none;
}

.switch::after {
    content: "";
    position: absolute;
    top: -3px;
    right: 0;
    width: 22px;
    height: 22px;
    border-radius: 50%;
    background: #483a86;
    box-shadow: 0 1px 3px rgba(0, 0, 0, 0.4);
}

.fee {
    width: 251px;
    margin-right: 13px;
}

.help {
    color: #483a86;
}

.hicon {
    width: 26px;
    height: 26px;
}

.check input {
    position: relative;
    flex: none;
    width: 20px;
    height: 20px;
    margin: 0 13px 0 0;
    border: 2px solid #5f5f66;
    border-radius: 2px;
    appearance: none;
}

.check input:checked {
    border-color: #483a86;
    background: #483a86;
}

.check input:checked::after {
    content: "";
    position: absolute;
    left: 5px;
    top: 0;
    width: 6px;
    height: 12px;
    border: solid #fff;
    border-width: 0 2px 2px 0;
    transform: rotate(45deg);
}

.check label {
    line-height: 27px;
}

.other {
    margin-left: auto;
}

.other label {
    width: 298px;
    padding-right: 30px;
}

.items {
    height: 24px;
    margin-top: 31px;
}

.items .help {
    margin-left: 40px;
}

.expanders {
    display: flex;
    justify-content: flex-end;
    gap: 28px;
    padding: 35px 14px 14px;
    color: #66666b;
}

.faded {
    color: #bdbdc0;
}

.item {
    display: flex;
    align-items: center;
    height: 53px;
    margin: 0 0 18px 3px;
    padding: 0 32px 0 24px;
    border-radius: 5px;
    background: #fff;
    box-shadow: 0 2px 2px rgba(0, 0, 0, 0.2);
    font-size: 16px;
    line-height: 21px;
}

.item:last-child {
    margin-bottom: 0;
}

.item .icon {
    color: #483a86;
}

.num {
    width: 28px;
    text-align: right;
}

.name {
    width: 320px;
    margin: 0 9px 0 8px;
}

.type {
    flex: 1;
}

.subs {
    width: 160px;
    margin-right: 50px;
    text-align: center;
}

.item .icon-btn + .icon-btn {
    margin-left: 28px;
}

/* progress panel */
.progress {
    flex: none;
    align-self: flex-start;
    width: 398px;
    margin: 9px 4px 0 0;
    border: 1px solid #d3dada;
    border-radius: 5px;
    background: #fff;
    color: #000;
}

.content + .progress {
    margin-left: -1px;
}

.progress-main {
    padding: 18px 18px 17px;
}

.progress h2 {
    font-size: 27px;
    line-height: 34px;
    font-weight: 400;
}

.progress-row {
    display: flex;
    align-items: center;
    gap: 9px;
    margin-top: 10px;
}

.ring {
    width: 44px;
    height: 44px;
}

.progress-step {
    font-size: 14px;
    line-height: 18px;
}

.progress-name {
    line-height: 26px;
    font-weight: 500;
}

.show-more {
    display: flex;
    align-items: center;
    justify-content: space-between;
    width: 100%;
    height: 58px;
    padding: 0 17px;
    border-top: 1px solid #d3dada;
    color: #483a86;
    font-size: 16px;
    font-weight: 500;
}
```
